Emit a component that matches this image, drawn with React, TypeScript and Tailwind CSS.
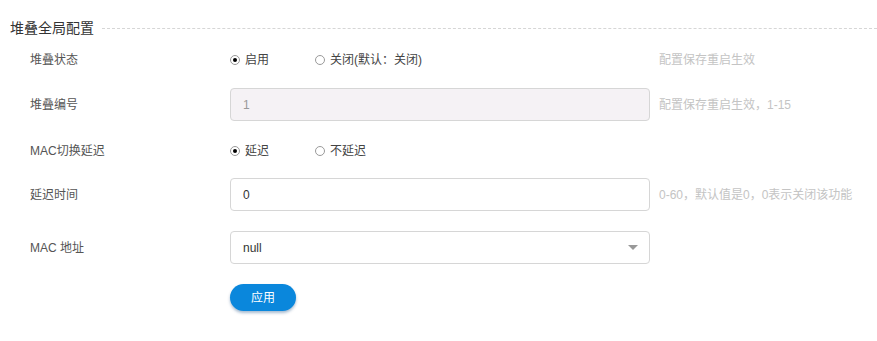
import React from "react";

const font = { fontFamily: '"Liberation Sans", "Noto Sans CJK SC", sans-serif' };

function Radio({ checked, label }: { checked?: boolean; label: string }) {
  return (
    <label className="flex items-center gap-[5px] text-[12px] text-[#444]">
      <span className="w-[10px] h-[10px] rounded-full border border-[#9a9a9a] bg-white flex items-center justify-center">
        {checked && <span className="w-[4px] h-[4px] rounded-full bg-black" />}
      </span>
      <span>{label}</span>
    </label>
  );
}

function Hint({ children }: { children: React.ReactNode }) {
  return <span className="ml-[9px] text-[12px] text-[#c4c4c4]">{children}</span>;
}

function Label({ children }: { children: React.ReactNode }) {
  return <div className="w-[230px] shrink-0 pl-[30px] text-[12px] text-[#555]">{children}</div>;
}

export default function App() {
  return (
    <div className="w-[877px] h-[341px] bg-white relative" style={font}>
      {/* Legend */}
      <div className="flex items-center pt-[18px] h-[38px] pl-[10px]">
        <span className="text-[14px] text-[#333] leading-[20px]">堆叠全局配置</span>
        <div className="flex-1 ml-[8px] border-t border-dashed border-[#d6d6d6] mt-[1px]" />
      </div>

      {/* 堆叠状态 */}
      <div className="flex items-center h-[34px] mt-[5px]">
        <Label>堆叠状态</Label>
        <div className="w-[420px] shrink-0 flex items-center">
          <div className="w-[85px]">
            <Radio checked label="启用" />
          </div>
          <Radio label="关闭(默认：关闭)" />
        </div>
        <Hint>配置保存重启生效</Hint>
      </div>

      {/* 堆叠编号 */}
      <div className="flex items-center h-[33px] mt-[11px]">
        <Label>堆叠编号</Label>
        <div className="w-[420px] shrink-0 h-[33px] border border-[#d6d6d6] rounded-[4px] bg-[#f5f2f5] flex items-center pl-[12px] text-[12px] text-[#999]">
          1
        </div>
        <Hint>配置保存重启生效，1-15</Hint>
      </div>

      {/* MAC切换延迟 */}
      <div className="flex items-center h-[34px] mt-[13px]">
        <Label>MAC切换延迟</Label>
        <div className="w-[420px] shrink-0 flex items-center">
          <div className="w-[85px]">
            <Radio checked label="延迟" />
          </div>
          <Radio label="不延迟" />
        </div>
      </div>

      {/* 延迟时间 */}
      <div className="flex items-center h-[33px] mt-[10px]">
        <Label>延迟时间</Label>
        <div className="w-[420px] shrink-0 h-[33px] border border-[#d6d6d6] rounded-[4px] bg-white flex items-center pl-[12px] text-[12px] text-[#333]">
          0
        </div>
        <Hint>0-60，默认值是0，0表示关闭该功能</Hint>
      </div>

      {/* MAC 地址 */}
      <div className="flex items-center h-[33px] mt-[20px]">
        <Label>MAC 地址</Label>
        <div className="w-[420px] shrink-0 h-[33px] border border-[#d6d6d6] rounded-[4px] bg-white flex items-center justify-between pl-[12px] pr-[11px] text-[12px] text-[#333]">
          <span>null</span>
          <span className="w-0 h-0 border-l-[5px] border-r-[5px] border-t-[5px] border-l-transparent border-r-transparent border-t-[#999]" />
        </div>
      </div>

      {/* 应用 */}
      <div className="flex mt-[20px]">
        <div className="w-[230px] shrink-0" />
        <button className="w-[66px] h-[27px] rounded-full bg-[#0a87dc] text-white text-[12px] shadow-[0_2px_3px_rgba(0,60,120,0.35)]">
          应用
        </button>
      </div>
    </div>
  );
}
